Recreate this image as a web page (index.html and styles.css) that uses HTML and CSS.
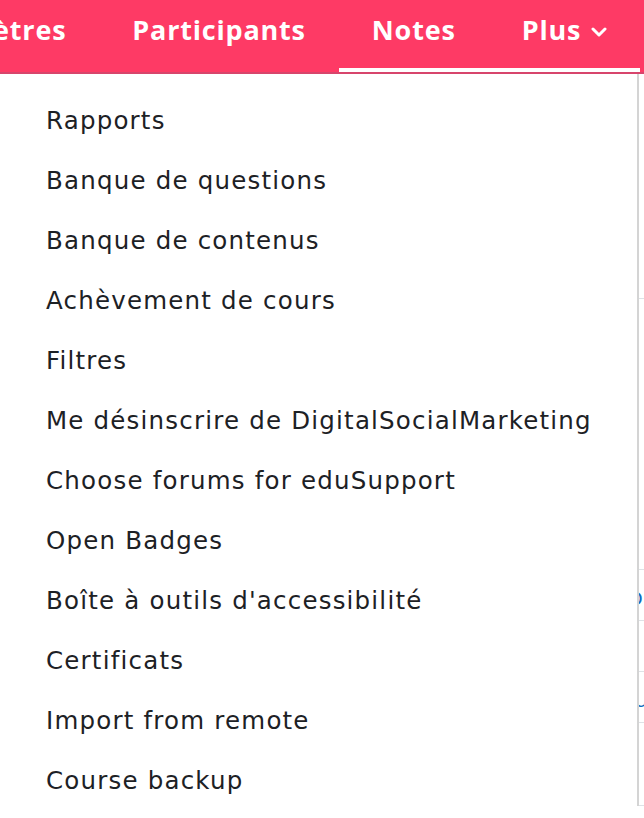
FILE: index.html
```html
<!DOCTYPE html>
<html lang="fr">
<head>
  <meta charset="UTF-8" />
  <meta name="viewport" content="width=device-width, initial-scale=1.0" />
  <title>DigitalSocialMarketing</title>
  <link rel="stylesheet" href="styles.css">
</head>
<body>
  <header class="top">
    <nav class="navbar">
      <ul class="tabs">
        <li class="tab">Paramètres</li>
        <li class="tab">Participants</li>
        <li class="tab active">Notes</li>
        <li class="tab open">Plus
          <svg class="chevron" viewBox="0 0 16 10" width="16" height="10">
            <path d="M2 2 L8 8 L14 2" fill="none" stroke="#fff" stroke-width="3" stroke-linecap="round" stroke-linejoin="round"/>
          </svg>
        </li>
      </ul>
    </nav>

    <ul class="dropdown">
      <li>Rapports</li>
      <li>Banque de questions</li>
      <li>Banque de contenus</li>
      <li>Achèvement de cours</li>
      <li>Filtres</li>
      <li>Me désinscrire de DigitalSocialMarketing</li>
      <li>Choose forums for eduSupport</li>
      <li>Open Badges</li>
      <li>Boîte à outils d'accessibilité</li>
      <li>Certificats</li>
      <li>Import from remote</li>
      <li>Course backup</li>
    </ul>
  </header>

  <main class="course">
    <div class="block block-top"></div>
    <div class="block block-mid"></div>
    <div class="row"><span class="link">Ressources</span></div>
    <div class="row"></div>
    <div class="row"><span class="link">Cours (1)</span></div>
    <div class="row row-last"></div>
  </main>
</body>
</html>
```

FILE: styles.css
```css
body {
  margin: 0;
  font-family: 'Open Sans', 'Noto Sans', sans-serif;
  color: #1d2125;
  background: #fff;
  overflow: hidden;
}
.top {
  position: relative;
}
.navbar {
  position: relative;
  z-index: 2;
  height: 72px;
  background: #fe3a65;
  border-bottom: 2px solid #d7456c;
  overflow: hidden;
}
.tabs {
  list-style: none;
  margin: 0;
  padding: 0 4px 0 0;
  height: 72px;
  display: flex;
  justify-content: flex-end;
}
.tab {
  position: relative;
  flex: none;
  padding: 11px 33px 0;
  color: #fff;
  font-weight: 700;
  font-size: 27px;
  letter-spacing: 0.8px;
  white-space: nowrap;
}
.tab.active::after,
.tab.open::after {
  content: "";
  position: absolute;
  left: 0;
  right: 0;
  bottom: 0;
  height: 4px;
  background: #fff;
}
.chevron {
  margin-left: 2px;
  vertical-align: 3px;
}
.dropdown {
  position: absolute;
  z-index: 1;
  top: 73px;
  left: -2px;
  width: 638px;
  margin: 0;
  padding: 16px 0 40px;
  list-style: none;
  background: #fff;
  border: 1px solid #d4d4d4;
  border-right-width: 2px;
  border-radius: 0 0 6px 6px;
}
.dropdown li {
  padding: 13px 47px 11px;
  font-family: 'DejaVu Sans', sans-serif;
  font-size: 24.5px;
  line-height: 36px;
  letter-spacing: 1.2px;
  white-space: nowrap;
}
.block {
  border-bottom: 1px solid #dee2e6;
}
.block-top {
  height: 224px;
}
.block-mid {
  height: 270px;
}
.row {
  height: 50px;
  border-bottom: 1px solid #dee2e6;
  display: flex;
  align-items: center;
  justify-content: flex-end;
  margin-right: -60px;
}
.row-last {
  height: 82px;
}
.link {
  color: #0f6cbf;
  font-size: 24px;
}
```
